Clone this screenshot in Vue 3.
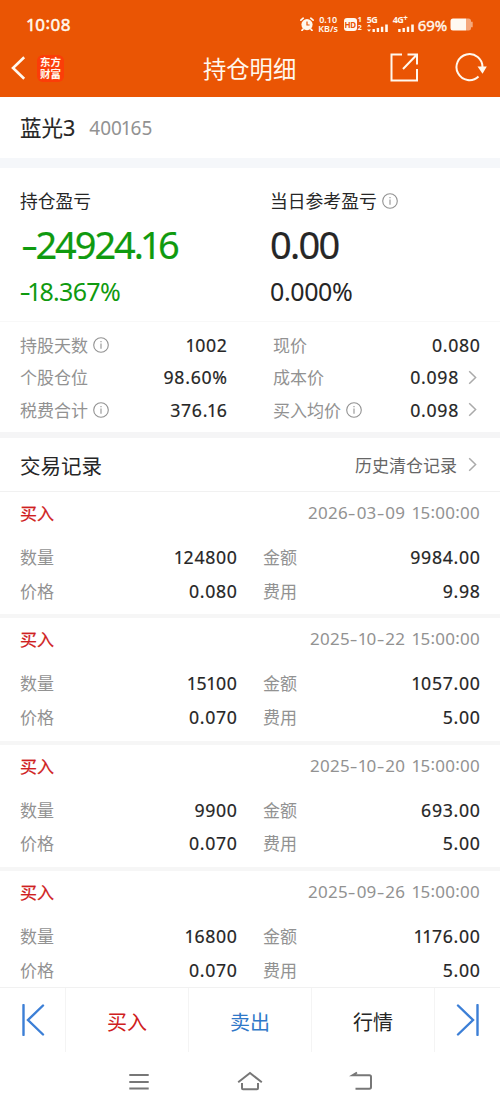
<script setup>
import { h } from 'vue'

const marks = { 1: 'one', ':': 'colon', '-': 'dash' }
const Num = (props) =>
  h('span', { class: 'num' }, [...props.v].map((c) => (marks[c] ? h('i', { class: marks[c] }, c) : c)))
Num.props = ['v']

const Info = () =>
  h('svg', { class: 'info', viewBox: '0 0 16 16' }, [
    h('circle', { cx: 8, cy: 8, r: 7.3 }),
    h('path', { d: 'M8 6.6V11.8M8 4V5.2' }),
  ])
const Chevron = () =>
  h('svg', { class: 'chevron', viewBox: '0 0 9 15' }, [h('path', { d: 'M1.2 1.2L7.6 7.5L1.2 13.8' })])

const stats = [
  { label: '持股天数', info: true, value: '1002' },
  { label: '现价', value: '0.080' },
  { label: '个股仓位', value: '98.60%' },
  { label: '成本价', value: '0.098', link: true },
  { label: '税费合计', info: true, value: '376.16' },
  { label: '买入均价', info: true, value: '0.098', link: true },
]

const records = [
  { time: '2026-03-09 15:00:00', qty: '124800', amount: '9984.00', price: '0.080', fee: '9.98' },
  { time: '2025-10-22 15:00:00', qty: '15100', amount: '1057.00', price: '0.070', fee: '5.00' },
  { time: '2025-10-20 15:00:00', qty: '9900', amount: '693.00', price: '0.070', fee: '5.00' },
  { time: '2025-09-26 15:00:00', qty: '16800', amount: '1176.00', price: '0.070', fee: '5.00' },
]
</script>

<template>
  <div class="screen">
    <header class="top">
      <div class="status">
        <Num class="clock" v="10:08" />
        <svg class="alarm" viewBox="0 0 14 14">
          <circle cx="7" cy="7.6" r="5.6" fill="#fff8ee" />
          <path d="M.9 3.2L3.2 1.2M13.1 3.2L10.8 1.2M3 12.2L2 13.4M11 12.2L12 13.4" stroke="#fff8ee" stroke-width="1.7" stroke-linecap="round" />
          <path d="M7 4.6V8H9.6" fill="none" stroke="#ea5504" stroke-width="1.2" />
        </svg>
        <div class="rate"><span>0.10</span><span>KB/s</span></div>
        <div class="hd">HD</div>
        <div class="sims"><span>1</span><span>2</span></div>
        <div class="signal five">
          <span>5G</span>
          <svg viewBox="0 0 22 8"><path d="M2 .2L4 2.6H0ZM2 7.8L4 5.4H0Z" /><path d="M5.5 5h2.4v3H5.5zM9.7 4h2.4v4H9.7zM13.9 2.8h2.4V8h-2.4zM18.2 .5h2.6V8h-2.6z" /></svg>
        </div>
        <div class="signal four">
          <span>4G<sup>+</sup></span>
          <svg viewBox="0 0 22 8"><path d="M5.2 5h2.4v3H5.2zM9.5 4h2.4v4H9.5zM13.8 2.8h2.4V8h-2.4zM18.2 .5h2.6V8h-2.6z" /></svg>
        </div>
        <div class="charge">69%</div>
        <svg class="battery" viewBox="0 0 24 13">
          <path d="M16 .5h2.500q2.500 0 2.500 2.500v.8h1.700v5.400H21v.8q0 2.500-2.500 2.500H16z" fill="#f5a87c" />
          <path d="M3 .5h13v12H3Q.5 12.500 .5 10V3Q.5 .5 3 .5z" fill="#fffaf2" />
        </svg>
      </div>
      <div class="bar">
        <svg class="back" viewBox="0 0 15 24"><path d="M13.200 1.200L2 12L13.200 22.800" /></svg>
        <div class="logo"><span>东方</span><span>财富</span></div>
        <h1>持仓明细</h1>
        <svg class="share" viewBox="0 0 29 29"><path d="M12 1.500H1.500V27.500H27V16M17.500 1.500H27V11.500M27 1.500L13 16" /></svg>
        <svg class="reload" viewBox="0 0 32 29"><path d="M23.500 23.500A13 13 0 1 1 27.500 14.500" /><path class="tip" d="M22.500 13.500H31.800L27.500 20.800Z" /></svg>
      </div>
    </header>

    <section class="stock"><b>蓝光<Num v="3" /></b><Num class="code" v="400165" /></section>

    <section class="profit">
      <div class="green">
        <p class="cap">持仓盈亏</p>
        <p class="big"><Num v="-24924.16" /></p>
        <p class="rateline"><Num v="-18.367%" /></p>
      </div>
      <div>
        <p class="cap">当日参考盈亏<Info /></p>
        <p class="big"><Num v="0.00" /></p>
        <p class="rateline"><Num v="0.000%" /></p>
      </div>
    </section>

    <section class="stats">
      <div v-for="s in stats" :key="s.label" class="stat">
        <span class="label">{{ s.label }}</span><Info v-if="s.info" />
        <Num class="val" :v="s.value" /><Chevron v-if="s.link" />
      </div>
    </section>

    <section class="title">
      <h2>交易记录</h2>
      <span>历史清仓记录</span><Chevron />
    </section>

    <main class="list">
      <article v-for="r in records" :key="r.time">
        <div class="head"><b>买入</b><Num class="time" :v="r.time" /></div>
        <div class="cells">
          <span class="label">数量</span><Num class="val" :v="r.qty" />
          <span class="label second">金额</span><Num class="val" :v="r.amount" />
          <span class="label">价格</span><Num class="val" :v="r.price" />
          <span class="label second">费用</span><Num class="val" :v="r.fee" />
        </div>
      </article>
    </main>

    <footer class="tabs">
      <div><svg viewBox="0 0 24 32"><path d="M2.500 1V31M22 1.500L7 16L22 30.500" /></svg></div>
      <div class="buy">买入</div>
      <div class="sell">卖出</div>
      <div>行情</div>
      <div><svg viewBox="0 0 24 32"><path d="M21.500 1V31M2 1.500L17 16L2 30.500" /></svg></div>
    </footer>

    <nav class="system">
      <svg viewBox="0 0 26 22"><path d="M3.300 4H22.700M3.300 11H22.700M3.300 17.500H22.700" /></svg>
      <svg viewBox="0 0 26 22"><path d="M1.200 11.200L13 2L24.800 11.200M5 12V17.300Q5 18.300 6 18.300H20Q21 18.300 21 17.300V12" /></svg>
      <svg viewBox="0 0 26 22"><path d="M9 1.500L4.500 4.300H21.500Q23 4.300 23 5.800V16Q23 17.700 21.500 17.700H7.500" /></svg>
    </nav>
  </div>
</template>

<style>
html, body { margin: 0; background: #fff; }
</style>

<style scoped>
.screen { width: 500px; height: 1111px; display: flex; flex-direction: column; overflow: hidden; background: #fff; color: #262626; font-family: "Noto Sans CJK SC", sans-serif; font-size: 17px; }
.screen > * { flex: none; box-sizing: border-box; }
p, h1, h2 { margin: 0; font-weight: 400; }
svg { display: block; fill: none; flex: none; }
:deep(i) { font-style: normal; }
:deep(.num), .num { font-family: "Noto Sans", "Noto Sans CJK SC", sans-serif; white-space: pre; }
:deep(.one) { margin: 0 -.06em; }
:deep(.colon) { position: relative; top: -.07em; }
:deep(.dash) { display: inline-block; transform: scaleX(1.4); margin: 0 .09em; }
:deep(.info) { width: 16px; height: 16px; margin-left: 5px; flex: none; fill: none; stroke: #929292; stroke-width: 1.1; }
:deep(.chevron) { width: 9px; height: 15px; fill: none; stroke: #aaa; stroke-width: 1.5; flex: none; }

.top { height: 97px; background: #ea5504; color: #fff8ee; }
.status { height: 48px; display: flex; align-items: center; padding: 0 26px 0 27px; }
.clock { font-size: 17px; -webkit-text-stroke: .5px #fff8ee; margin-right: auto; letter-spacing: .5px; }
.alarm { width: 14px; height: 14px; margin-right: 4px; }
.rate { width: 21px; display: flex; flex-direction: column; align-items: center; font: 600 9px/9.5px "Noto Sans", sans-serif; margin-right: 5px; }
.hd { width: 13px; height: 13px; border-radius: 3px; background: #fff8ee; color: #ea5504; font: 700 8px/13px "Noto Sans", sans-serif; text-align: center; letter-spacing: -.4px; }
.sims { width: 5px; display: flex; flex-direction: column; font: 700 7px/8px "Noto Sans", sans-serif; margin: 0 4px 0 1px; }
.signal { width: 22px; font: 700 9px/8px "Noto Sans", sans-serif; white-space: nowrap; letter-spacing: -.5px; }
.signal span { display: block; height: 8px; }
.signal sup { font-size: 8px; line-height: 0; vertical-align: 2px; }
.signal svg { width: 22px; height: 8px; fill: #fff8ee; }
.four { margin: 0 3px 0 4px; }
.charge { font: 400 15px/20px "Noto Sans", sans-serif; -webkit-text-stroke: .4px #fff8ee; margin: 1px 3px 0 0; letter-spacing: -.1px; }
.battery { width: 24px; height: 13px; }
.bar { height: 40px; display: grid; grid-template-columns: 15px 25px 1fr 29px 32px; align-items: center; padding: 0 12px 0 11px; }
.back { width: 15px; height: 24px; stroke: #fff8ee; stroke-width: 2.6; }
.logo { margin-left: 11px; width: 27px; height: 27px; box-sizing: border-box; padding-top: 1px; border-radius: 6px; background: #fb3d08; display: flex; flex-direction: column; align-items: center; font: 700 10.5px/12.5px "Noto Sans CJK SC", sans-serif; }
h1 { font-size: 23.3px; line-height: 40px; padding-left: 152px; }
.share { width: 29px; height: 29px; stroke: #fff8ee; stroke-width: 2; }
.bar .share { margin-left: -37px; margin-top: -2px; }
.reload { width: 32px; height: 29px; stroke: #fff8ee; stroke-width: 2; margin-left: -1px; margin-top: -2px; }
.tip { fill: #fff8ee; stroke: none; }

.stock { height: 71px; border-bottom: 10px solid #f5f7fa; padding: 0 20px; display: flex; align-items: center; }
.stock b { font-weight: 400; -webkit-text-stroke: .15px #262626; font-size: 21.5px; line-height: 30px; }
.code { font-size: 19px; color: #929292; margin-left: 14px; }

.profit { height: 154px; border-bottom: 1px solid #f8f8f8; padding: 0 20px; display: grid; grid-template-columns: 250px 1fr; }
.cap { display: flex; align-items: center; height: 24px; margin-top: 20px; font-size: 17.8px; line-height: 24px; }
.profit :deep(.info) { margin-top: 1px; margin-left: 5.5px; }
.big { height: 50px; margin-top: 6px; font-size: 38px; line-height: 50px; letter-spacing: -1.7px; -webkit-text-stroke: .2px; }
.rateline { height: 34px; margin-top: 5px; font-size: 25px; line-height: 34px; letter-spacing: -.4px; }
.green .big, .green .rateline { color: #0f9a0f; }
.green .big { letter-spacing: -2.1px; }
.green .big :deep(.one) { margin: 0 -.045em; }
.green .big :deep(.dash) { margin: 0 .07em; }
.green .rateline { letter-spacing: -.7px; }
.green .rateline :deep(.dash) { margin: 0 .03em; }

.stats { height: 116px; border-bottom: 6px solid #f5f5f6; padding: 7px 20px 0; display: grid; grid-template-columns: 207px 207px; column-gap: 46px; grid-auto-rows: 32.3px; }
.stat { display: flex; align-items: center; }
.label { color: #929292; font-size: 17px; line-height: 24px; }
.val { margin-left: auto; font-size: 17.7px; line-height: 24px; -webkit-text-stroke: .2px #262626; letter-spacing: .7px; margin-right: -.7px; }
.stat .chevron { margin-left: 9px; margin-right: 3px; }
.stat:has(.chevron) .val { margin-right: 0; }

.title { height: 54px; border-bottom: 1px solid #f1f1f1; padding: 0 23px 0 20px; display: flex; align-items: center; }
h2 { font-size: 20.500px; margin-right: auto; }
.title span { font-size: 17px; color: #666; margin-right: 11px; }

.list { height: 495px; overflow: hidden; }
article { height: 126.33px; box-sizing: border-box; border-bottom: 4px solid #f6f6f6; padding: 0 20px; }
.head { height: 41px; display: flex; align-items: center; justify-content: space-between; }
.head b { color: #cf2020; font-weight: 400; -webkit-text-stroke: .25px #cf2020; font-size: 17px; }
.time { color: #929292; font-size: 17px; letter-spacing: .25px; word-spacing: 2.5px; }
.cells { display: grid; grid-template-columns: 40px 177px 60px 183px; grid-auto-rows: 33.700px; padding-top: 7px; align-items: center; }
.cells .val { text-align: right; }
.second { padding-left: 26px; }

.tabs { height: 65px; border-top: 1px solid #f1f1f1; display: grid; grid-template-columns: 66px 123px 123px 123px 65px; font-size: 20px; text-align: center; }
.tabs div { border-right: 1px solid #f4f4f4; display: flex; align-items: center; justify-content: center; padding-top: 2px; }
.tabs div:last-child { border: 0; }
.tabs svg { width: 24px; height: 32px; stroke: #3c7fd6; stroke-width: 2.4; stroke-linecap: round; margin-top: -3px; }
.buy { color: #cf2020; }
.sell { color: #2f78c8; }
.system { height: 59px; display: flex; justify-content: center; gap: 85px; align-items: center; }
.system svg { width: 26px; height: 22px; stroke: #777; stroke-width: 2; }
</style>
